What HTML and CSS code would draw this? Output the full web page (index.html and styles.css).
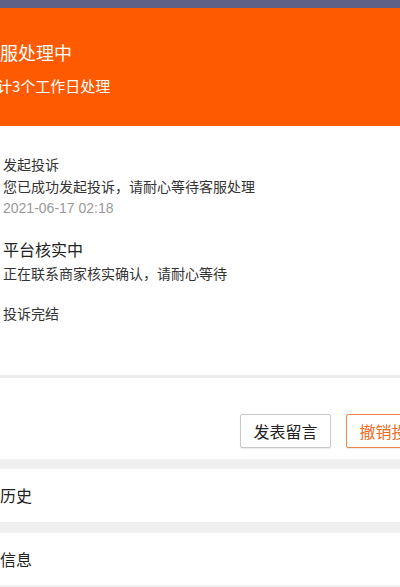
FILE: index.html
```html
<!DOCTYPE html>
<html lang="zh-CN">
  <head>
    <meta charset="UTF-8" />
    <meta name="viewport" content="width=device-width, initial-scale=1.0" />
    <title>投诉详情</title>
    <link rel="stylesheet" href="styles.css">
  </head>
  <body>
    <div class="status-bar"></div>
    <main class="page">
      <header class="banner">
        <h1>客服处理中</h1>
        <p>预计3个工作日处理</p>
      </header>

      <section class="timeline">
        <article class="step">
          <h2>发起投诉</h2>
          <p>您已成功发起投诉，请耐心等待客服处理</p>
          <time class="date">2021-06-17 02:18</time>
        </article>
        <article class="step step-current">
          <h2>平台核实中</h2>
          <p>正在联系商家核实确认，请耐心等待</p>
        </article>
        <article class="step">
          <h2>投诉完结</h2>
        </article>
      </section>

      <section class="actions">
        <button class="btn">发表留言</button>
        <button class="btn btn-primary">撤销投诉</button>
      </section>

      <a class="row" href="#">协商历史</a>
      <a class="row" href="#">订单信息</a>
    </main>
  </body>
</html>
```

FILE: styles.css
```css
html {
  box-sizing: border-box;
  font-family: "Noto Sans CJK SC", "Noto Sans", sans-serif;
  font-size: 14px;
}

*,
*:before,
*:after {
  box-sizing: inherit;
}

body {
  margin: 0;
  overflow: hidden;
  background-color: #f0f0f0;
  color: #333;
}

.status-bar {
  height: 8px;
  background-color: #5f6286;
}

.page {
  width: 490px;
  margin-left: -40px;
}

.banner {
  padding: 32px 0 30px 22px;
  background-color: #fe5a02;
  color: #fff;
}

.banner h1 {
  margin: 0 0 12px;
  font-size: 18px;
  font-weight: normal;
  line-height: 24px;
}

.banner p {
  margin: 0;
  font-size: 15px;
  line-height: 20px;
}

.timeline {
  padding: 27px 0 51px 43px;
  background-color: #fff;
  border-bottom: 3px solid #ececec;
}

.step {
  margin-bottom: 18px;
}

.step:last-child {
  margin-bottom: 0;
}

.step h2 {
  margin: 0;
  font-size: 14px;
  font-weight: normal;
  line-height: 22px;
}

.step p {
  margin: 0;
  line-height: 22px;
}

.step-current h2 {
  font-size: 16px;
  line-height: 24px;
  color: #222;
}

.step-current p {
  margin-top: 1px;
}

.date {
  display: block;
  font-family: "Liberation Sans", sans-serif;
  color: #999;
  line-height: 22px;
}

.actions {
  display: flex;
  justify-content: flex-end;
  gap: 15px;
  padding: 36px 13px 11px 0;
  background-color: #fff;
}

.btn {
  width: 91px;
  height: 34px;
  padding: 0;
  font-family: inherit;
  font-size: 16px;
  color: #222;
  background-color: #fff;
  border: 1px solid #c8c8c8;
  border-radius: 2px;
  box-shadow: 0 1px 1px rgba(0, 0, 0, 0.08);
}

.btn-primary {
  color: #f06a1e;
  border-color: #f0844a;
}

.row {
  display: block;
  margin-top: 10px;
  padding-left: 8px;
  height: 53px;
  line-height: 53px;
  font-size: 16px;
  color: #222;
  text-decoration: none;
  background-color: #fff;
}

.row + .row {
  margin-top: 11px;
  height: 52px;
  line-height: 52px;
}
```
